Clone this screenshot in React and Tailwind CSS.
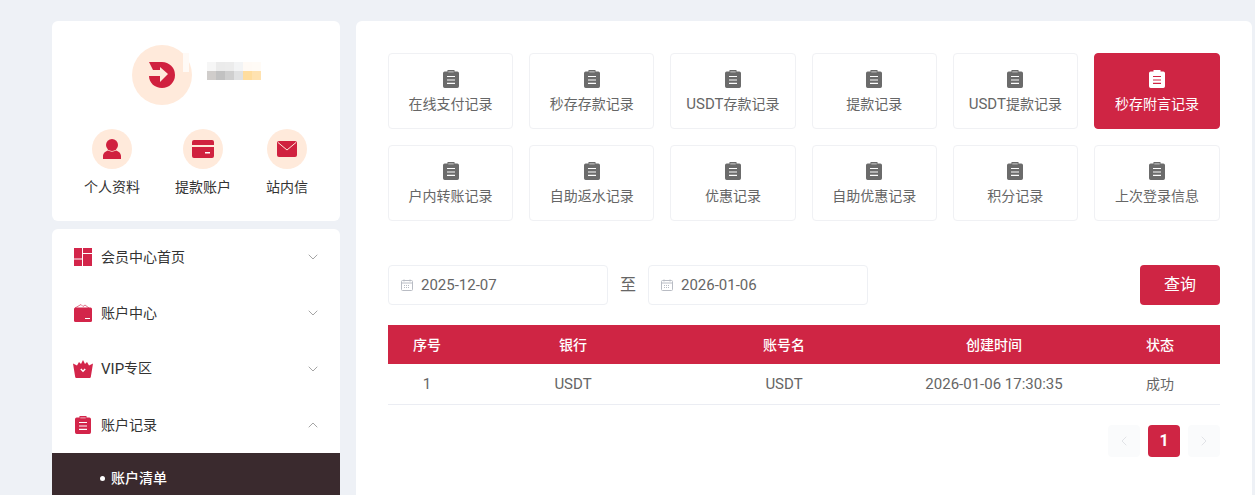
import React from 'react';
import { ChevronDown, ChevronUp, ChevronLeft, ChevronRight } from 'lucide-react';

const RecordIcon = ({ className }) => (
  <svg viewBox="0 0 16 18" className={className} fill="currentColor">
    <path
      fillRule="evenodd"
      d="M4.500 0h7v1.500h2.800A1.700 1.700 0 0 1 16 3.200v13.100a1.700 1.700 0 0 1-1.700 1.700H1.700A1.700 1.700 0 0 1 0 16.300V3.200a1.700 1.700 0 0 1 1.700-1.700h2.800V0zM4 6v1.100h8V6H4zm0 3.400v1.100h8V9.400H4zm0 3.400v1.100h8v-1.100H4z"
    />
    <rect x="5.300" y="1" width="5.400" height="1.600" opacity="0.4" fill="#fff" />
  </svg>
);

const Usdt = () => <span className="text-[15px]">USDT</span>;

const tabs = [
  '在线支付记录', '秒存存款记录', <><Usdt />存款记录</>, '提款记录', <><Usdt />提款记录</>, '秒存附言记录',
  '户内转账记录', '自助返水记录', '优惠记录', '自助优惠记录', '积分记录', '上次登录信息',
];

const menu = [
  {
    label: '会员中心首页',
    icon: (
      <svg viewBox="0 0 18 18" className="w-[18px] h-[18px]" fill="#d3254a">
        <rect x="0" y="0" width="8" height="10.500" />
        <rect x="0" y="11.500" width="8" height="6.500" />
        <rect x="9" y="0" width="9" height="5" />
        <rect x="9" y="6" width="9" height="12" />
      </svg>
    ),
  },
  {
    label: '账户中心',
    icon: (
      <svg viewBox="0 0 18 18" className="w-[18px] h-[18px]">
        <path d="M1 4 L7 0.500 L9 2.500 L11 1 L15 4" fill="none" stroke="#e2718a" strokeWidth="1" />
        <rect x="0" y="3.500" width="18" height="14.500" rx="1.500" fill="#d3254a" />
        <rect x="11" y="14" width="5" height="1" fill="#fff" />
      </svg>
    ),
  },
  {
    label: <><span className="text-[15px] relative top-px">VIP</span>专区</>,
    icon: (
      <svg viewBox="0 0 20 18" className="w-5 h-[18px] -ml-px">
        <path d="M0 3.500 L4 5.500 L6 2 L8 4 L10 0 L12 4 L14 2 L16 5.500 L20 3.500 L17.800 17 Q17.600 18 16.800 18 H3.200 Q2.400 18 2.200 17 Z" fill="#d3254a" />
        <path d="M7.800 9 L10 11.300 L12.200 9" fill="none" stroke="#fff" strokeWidth="1.400" />
      </svg>
    ),
  },
  {
    label: '账户记录',
    open: true,
    icon: <RecordIcon className="w-4 h-[18px] ml-px text-[#d3254a]" />,
  },
];

const shortcuts = [
  {
    label: '个人资料',
    icon: (
      <svg viewBox="0 0 20 20" className="w-5 h-5" fill="#d0213f">
        <circle cx="10" cy="6" r="6" />
        <path d="M1 20v-3c0-3 3-5 5-5.500 2.500 1.500 5.500 1.500 8 0 2 .5 5 2.500 5 5.500v3z" />
      </svg>
    ),
  },
  {
    label: '提款账户',
    icon: (
      <svg viewBox="0 0 22 18" className="w-[22px] h-[18px]" fill="#d0213f">
        <path d="M2 0h18a2 2 0 0 1 2 2v3H0V2a2 2 0 0 1 2-2zM0 7h22v9a2 2 0 0 1-2 2H2a2 2 0 0 1-2-2z" />
        <rect x="13" y="12" width="5" height="1.500" fill="#fff" />
      </svg>
    ),
  },
  {
    label: '站内信',
    icon: (
      <svg viewBox="0 0 20 16" className="w-5 h-4">
        <rect width="20" height="16" rx="2" fill="#d0213f" />
        <path d="M1 1.500 L10 9 L19 1.500" fill="none" stroke="#ffeadb" strokeWidth="1" />
      </svg>
    ),
  },
];

const blurTop = ['bg-[#f6f6f6]', 'bg-[#ebebeb]', 'bg-[#ececec]', 'bg-[#f3f4f5]', 'bg-[#fffaf5]', 'bg-[#fffbf6]'];
const blurBottom = ['bg-[#d0cdcb]', 'bg-[#c2c2c2]', 'bg-[#cfcfcf]', 'bg-[#e0e1e2]', 'bg-[#ffdd9e]', 'bg-[#ffe2b0]'];

const CalendarIcon = () => (
  <svg viewBox="0 0 12 12" className="w-3 h-3 shrink-0" fill="none" stroke="#b9bcc4" strokeWidth="1">
    <rect x="0.500" y="1.500" width="11" height="10" rx="1" />
    <path d="M0.500 4h11M3 .5v2M9 .5v2" />
    <path d="M3 6.500h6M3 8.500h6" strokeDasharray="1 1" />
  </svg>
);

const DateBox = ({ value }) => (
  <div className="w-[220px] h-10 flex items-center gap-2 pl-3 bg-white border border-[#eef0f4] rounded text-[15px] text-[#666]">
    <CalendarIcon />
    <span className="pt-0.5">{value}</span>
  </div>
);

export default function App() {
  return (
    <div className="h-[495px] overflow-hidden bg-[#eef1f6] flex gap-4 pl-[52px] pr-[3px] pt-[21px] text-sm text-[#333] font-['Roboto','Noto_Sans_CJK_SC',sans-serif]">
      {/* left column */}
      <aside className="w-[288px] shrink-0 flex flex-col gap-2">
        <div className="h-[200px] bg-white rounded-md px-8 pt-6">
          <div className="flex items-center justify-center">
            <div className="relative w-[60px] h-[60px] rounded-full bg-[#ffeadb] flex items-center justify-center">
              <svg viewBox="0 0 26 26" className="w-[26px] h-[26px]" fill="#d0213f">
                <path d="M0 0H13A13 13 0 0 1 13 26C6 26 0 21 0 14H11V20L19 12L11 5V8H4Z" />
              </svg>
              <div className="absolute left-[51px] top-2 w-[6px] h-[19px] bg-[#fffaf6]" />
            </div>
            <div className="ml-[15px] mb-2">
              <div className="flex">
                {blurTop.map((c, i) => <div key={i} className={`w-[9px] h-[9px] ${c}`} />)}
              </div>
              <div className="flex">
                {blurBottom.map((c, i) => <div key={i} className={`w-[9px] h-[9px] ${c}`} />)}
              </div>
            </div>
          </div>
          <div className="flex justify-between mt-6">
            {shortcuts.map((s) => (
              <div key={s.label} className="flex flex-col items-center">
                <div className="w-10 h-10 rounded-full bg-[#ffeadb] flex items-center justify-center">{s.icon}</div>
                <span className="mt-2 leading-5">{s.label}</span>
              </div>
            ))}
          </div>
        </div>

        <div className="flex-1 bg-white rounded-t-md overflow-hidden">
          {menu.map((m, i) => (
            <div key={i} className="h-14 flex items-center pl-[22px] pr-[19px]">
              <div className="w-5 flex justify-start">{m.icon}</div>
              <span className="ml-[7px] flex-1">{m.label}</span>
              {m.open
                ? <ChevronUp className="w-4 h-4 text-[#777]" strokeWidth={1} />
                : <ChevronDown className="w-4 h-4 text-[#777]" strokeWidth={1} />}
            </div>
          ))}
          <div className="h-[50px] bg-[#3a2a2e] flex items-center pl-12 text-white font-medium">
            <span className="w-[5px] h-[5px] rounded-full bg-white mr-[6px]" />
            账户清单
          </div>
        </div>
      </aside>

      {/* main panel */}
      <main className="flex-1 bg-white rounded-t-md px-8 pt-8">
        <div className="grid grid-cols-[repeat(5,125.2px)_1fr] gap-4">
          {tabs.map((t, i) => {
            const active = i === 5;
            return (
              <div
                key={i}
                className={`h-[76px] flex flex-col items-center justify-center gap-[6px] pt-px rounded border ${
                  active ? 'bg-[#cf2544] border-[#cf2544] text-white' : 'bg-white border-[#f0f1f4] text-[#666]'
                }`}
              >
                <RecordIcon className={`w-4 h-[18px] ${active ? 'text-white' : 'text-[#6b6b6b]'}`} />
                <span className="leading-5">{t}</span>
              </div>
            );
          })}
        </div>

        <div className="flex items-center mt-11">
          <DateBox value="2025-12-07" />
          <span className="w-10 text-center text-base text-[#666]">至</span>
          <DateBox value="2026-01-06" />
          <button className="ml-auto w-20 h-10 rounded bg-[#cf2544] text-white text-base">查询</button>
        </div>

        <table className="w-full mt-5 table-fixed text-center">
          <colgroup>
            <col className="w-[78px]" />
            <col className="w-[214px]" />
            <col className="w-[208px]" />
            <col className="w-[212px]" />
            <col className="w-[120px]" />
          </colgroup>
          <thead>
            <tr className="h-[39px] bg-[#cf2544] text-white">
              <th className="font-medium">序号</th>
              <th className="font-medium">银行</th>
              <th className="font-medium">账号名</th>
              <th className="font-medium">创建时间</th>
              <th className="font-medium">状态</th>
            </tr>
          </thead>
          <tbody>
            <tr className="h-10 border-b border-[#ebedf3] text-[#666]">
              <td className="text-[15px] pt-0.5">1</td>
              <td className="pt-0.5"><Usdt /></td>
              <td className="pt-0.5"><Usdt /></td>
              <td className="text-[15px] pt-0.5">2026-01-06 17:30:35</td>
              <td>成功</td>
            </tr>
          </tbody>
        </table>

        <div className="flex justify-end gap-2 mt-5">
          <div className="w-8 h-8 rounded bg-[#fafbfc] flex items-center justify-center text-[#d5d7dc]">
            <ChevronLeft className="w-4 h-4" strokeWidth={1} />
          </div>
          <div className="w-8 h-8 rounded bg-[#cf2544] flex items-center justify-center text-white font-bold text-base">1</div>
          <div className="w-8 h-8 rounded bg-[#fafbfc] flex items-center justify-center text-[#d5d7dc]">
            <ChevronRight className="w-4 h-4" strokeWidth={1} />
          </div>
        </div>
      </main>
    </div>
  );
}
